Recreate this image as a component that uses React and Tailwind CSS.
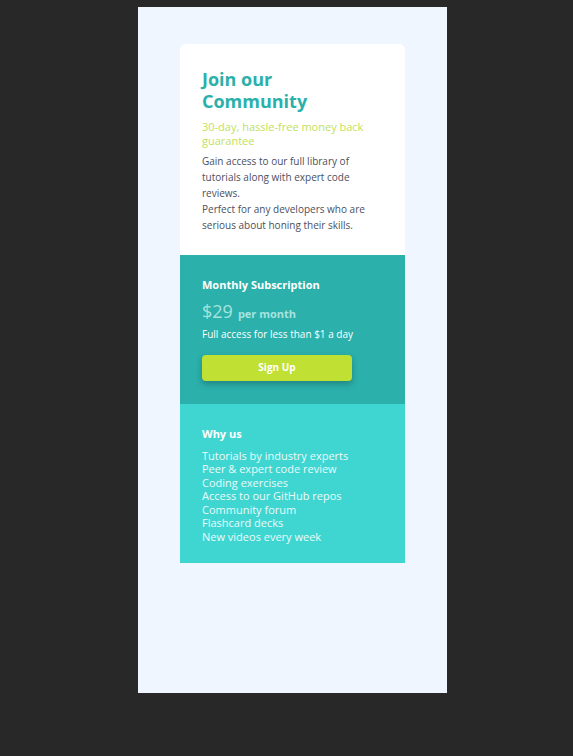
import React from 'react';

const features = [
  'Tutorials by industry experts',
  'Peer & expert code review',
  'Coding exercises',
  'Access to our GitHub repos',
  'Community forum',
  'Flashcard decks',
  'New videos every week',
];

const App = () => {
  return (
    <div className="min-h-[756px] bg-[#282828] pt-[7px] pl-[138px] font-['Open_Sans',sans-serif]">
      <div className="w-[309px] h-[686px] bg-[#eff6ff] pt-[37px] px-[42px]">
        <div className="rounded-t-[6px] overflow-hidden">
          {/* Intro */}
          <div className="bg-white px-[22px] pt-[24px] pb-[22px]">
            <h1 className="text-[18px] leading-[22px] font-bold text-[#2bb0ab]">
              Join our
              <br />
              Community
            </h1>
            <p className="mt-[8px] text-[11px] leading-[14px] text-[#c3e05a]">
              30-day, hassle-free money back guarantee
            </p>
            <p className="mt-[5px] text-[10px] leading-[16px] text-[#4b4f5e]">
              Gain access to our full library of tutorials along with expert code reviews.
              <br />
              Perfect for any developers who are serious about honing their skills.
            </p>
          </div>

          {/* Subscription */}
          <div className="bg-[#2bb0ab] px-[22px] pt-[23px] pb-[23px]">
            <h2 className="text-[11px] leading-[14px] font-bold text-white">Monthly Subscription</h2>
            <div className="mt-[8px] flex items-baseline gap-[5px] text-[#a6e3df]">
              <span className="text-[18px] leading-[22px]">$29</span>
              <span className="text-[11px] font-bold">per month</span>
            </div>
            <p className="mt-[4px] text-[10px] leading-[14px] font-medium text-white">
              Full access for less than $1 a day
            </p>
            <button className="mt-[14px] w-[150px] h-[26px] rounded-[4px] bg-[#c0e033] text-white text-[10px] font-bold shadow-[0_3px_6px_rgba(0,0,0,0.25)]">
              Sign Up
            </button>
          </div>

          {/* Why us */}
          <div className="bg-[#3fd5d1] px-[22px] pt-[23px] pb-[20px]">
            <h2 className="text-[11px] leading-[14px] font-bold text-white">Why us</h2>
            <ul className="mt-[8px] text-[11px] leading-[13.5px] font-medium text-[#eafbfa]">
              {features.map((f) => (
                <li key={f}>{f}</li>
              ))}
            </ul>
          </div>
        </div>
      </div>
    </div>
  );
};

export default App;
